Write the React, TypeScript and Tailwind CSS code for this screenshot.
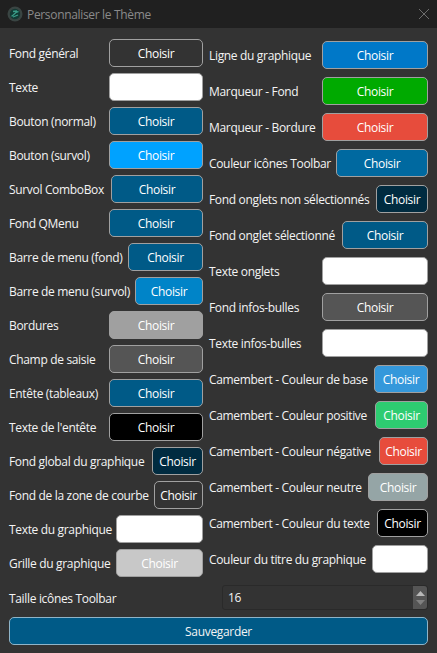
const font = { fontFamily: '"Open Sans", sans-serif', letterSpacing: "-0.33px" };

type Row = { label: string; bg: string; w: string };

const left: Row[] = [
  { label: "Fond général", bg: "bg-[#333333]", w: "w-[94px]" },
  { label: "Texte", bg: "bg-white", w: "w-[94px]" },
  { label: "Bouton (normal)", bg: "bg-[#005a87]", w: "w-[94px]" },
  { label: "Bouton (survol)", bg: "bg-[#00a2ff]", w: "w-[94px]" },
  { label: "Survol ComboBox", bg: "bg-[#005a87]", w: "w-[92px]" },
  { label: "Fond QMenu", bg: "bg-[#005a87]", w: "w-[94px]" },
  { label: "Barre de menu (fond)", bg: "bg-[#005a87]", w: "w-[75px]" },
  { label: "Barre de menu (survol)", bg: "bg-[#0084c8]", w: "w-[68px]" },
  { label: "Bordures", bg: "bg-[#a0a0a0]", w: "w-[94px]" },
  { label: "Champ de saisie", bg: "bg-[#555555]", w: "w-[94px]" },
  { label: "Entête (tableaux)", bg: "bg-[#005a87]", w: "w-[94px]" },
  { label: "Texte de l'entête", bg: "bg-black", w: "w-[94px]" },
  { label: "Fond global du graphique", bg: "bg-[#002b40]", w: "w-[51px]" },
  { label: "Fond de la zone de courbe", bg: "bg-[#333333]", w: "w-[49px]" },
  { label: "Texte du graphique", bg: "bg-white", w: "w-[87px]" },
  { label: "Grille du graphique", bg: "bg-[#c8c8c8]", w: "w-[87px]" },
];

const right: Row[] = [
  { label: "Ligne du graphique", bg: "bg-[#0078c8]", w: "w-[106px]" },
  { label: "Marqueur - Fond", bg: "bg-[#00aa00]", w: "w-[106px]" },
  { label: "Marqueur - Bordure", bg: "bg-[#e74c3c]", w: "w-[106px]" },
  { label: "Couleur icônes Toolbar", bg: "bg-[#0069a0]", w: "w-[92px]" },
  { label: "Fond onglets non sélectionnés", bg: "bg-[#002b40]", w: "w-[52px]" },
  { label: "Fond onglet sélectionné", bg: "bg-[#005a87]", w: "w-[86px]" },
  { label: "Texte onglets", bg: "bg-white", w: "w-[106px]" },
  { label: "Fond infos-bulles", bg: "bg-[#555555]", w: "w-[106px]" },
  { label: "Texte infos-bulles", bg: "bg-white", w: "w-[106px]" },
  { label: "Camembert - Couleur de base", bg: "bg-[#3498db]", w: "w-[54px]" },
  { label: "Camembert - Couleur positive", bg: "bg-[#2ecc71]", w: "w-[53px]" },
  { label: "Camembert - Couleur négative", bg: "bg-[#e74c3c]", w: "w-[49px]" },
  { label: "Camembert - Couleur neutre", bg: "bg-[#95a5a6]", w: "w-[60px]" },
  { label: "Camembert - Couleur du texte", bg: "bg-black", w: "w-[51px]" },
  { label: "Couleur du titre du graphique", bg: "bg-white", w: "w-[56px]" },
];

function ColorRow({ label, bg, w }: Row) {
  return (
    <div className="flex items-center justify-between h-[28px]">
      <span className="whitespace-nowrap text-[12px] text-[#f4f4f4] pt-[2px]">{label}</span>
      <button className={`${w} shrink-0 h-[28px] pt-[1px] rounded-[5px] border border-[#a0a0a0] text-[12px] text-white ${bg}`} style={font}>
        Choisir
      </button>
    </div>
  );
}

export default function App() {
  return (
    <div className="w-[437px] h-[653px] bg-[#333333] flex flex-col overflow-hidden" style={font}>
      <div className="h-[28px] bg-[#202020] flex items-center pl-[7px] pr-[6px] shrink-0">
        <svg width="16" height="16" viewBox="0 0 16 16" className="shrink-0">
          <circle cx="8" cy="8" r="7.5" fill="#3a4543" />
          <circle cx="8" cy="8" r="5.2" fill="#123a34" />
          <path d="M4.5 10 C7 10 7 6 11.5 5.5 M6 5.5 L10 5 M6 11 L11 9" stroke="#3a9c88" strokeWidth="1.3" fill="none" />
        </svg>
        <span className="ml-[4px] text-[12px] text-[#8a8a8a] pt-[1px]">Personnaliser le Thème</span>
        <svg width="10" height="10" viewBox="0 0 10 10" className="ml-auto mr-[2px]">
          <path d="M0 0 L10 10 M10 0 L0 10" stroke="#6e6e6e" strokeWidth="1" />
        </svg>
      </div>
      <div className="flex-1 flex flex-col px-[9px]">
        <div className="flex gap-[6px]">
          <div className="w-[194px] flex flex-col gap-[6px] pt-[11px]">
            {left.map((r) => <ColorRow key={r.label} {...r} />)}
          </div>
          <div className="w-[219px] flex flex-col gap-[8px] pt-[13px]">
            {right.map((r) => <ColorRow key={r.label} {...r} />)}
          </div>
        </div>
        <div className="flex items-center mt-[8px] h-[25px]">
          <span className="w-[213px] text-[12px] text-[#f4f4f4] pt-[2px]">Taille icônes Toolbar</span>
          <div className="flex-1 h-[25px] rounded-[3px] border border-[#2a2a2a] bg-[#333333] flex items-center justify-between pl-[5px]">
            <span className="text-[12px] text-[#f4f4f4] pt-[1px]">16</span>
            <div className="w-[14px] h-full bg-[#555555] rounded-r-[3px] flex flex-col items-center justify-center gap-[4px]">
              <svg width="9" height="5" viewBox="0 0 9 5"><path d="M4.5 0 L9 5 L0 5 Z" fill="#b8b8b8" /></svg>
              <svg width="9" height="5" viewBox="0 0 9 5"><path d="M0 0 L9 0 L4.5 5 Z" fill="#808080" /></svg>
            </div>
          </div>
        </div>
        <button className="mt-[7px] h-[28px] pt-[1px] w-full rounded-[5px] border border-[#8fb4c8] bg-[#005a87] text-[12px] text-[#f4f4f4]" style={font}>
          Sauvegarder
        </button>
      </div>
    </div>
  );
}
